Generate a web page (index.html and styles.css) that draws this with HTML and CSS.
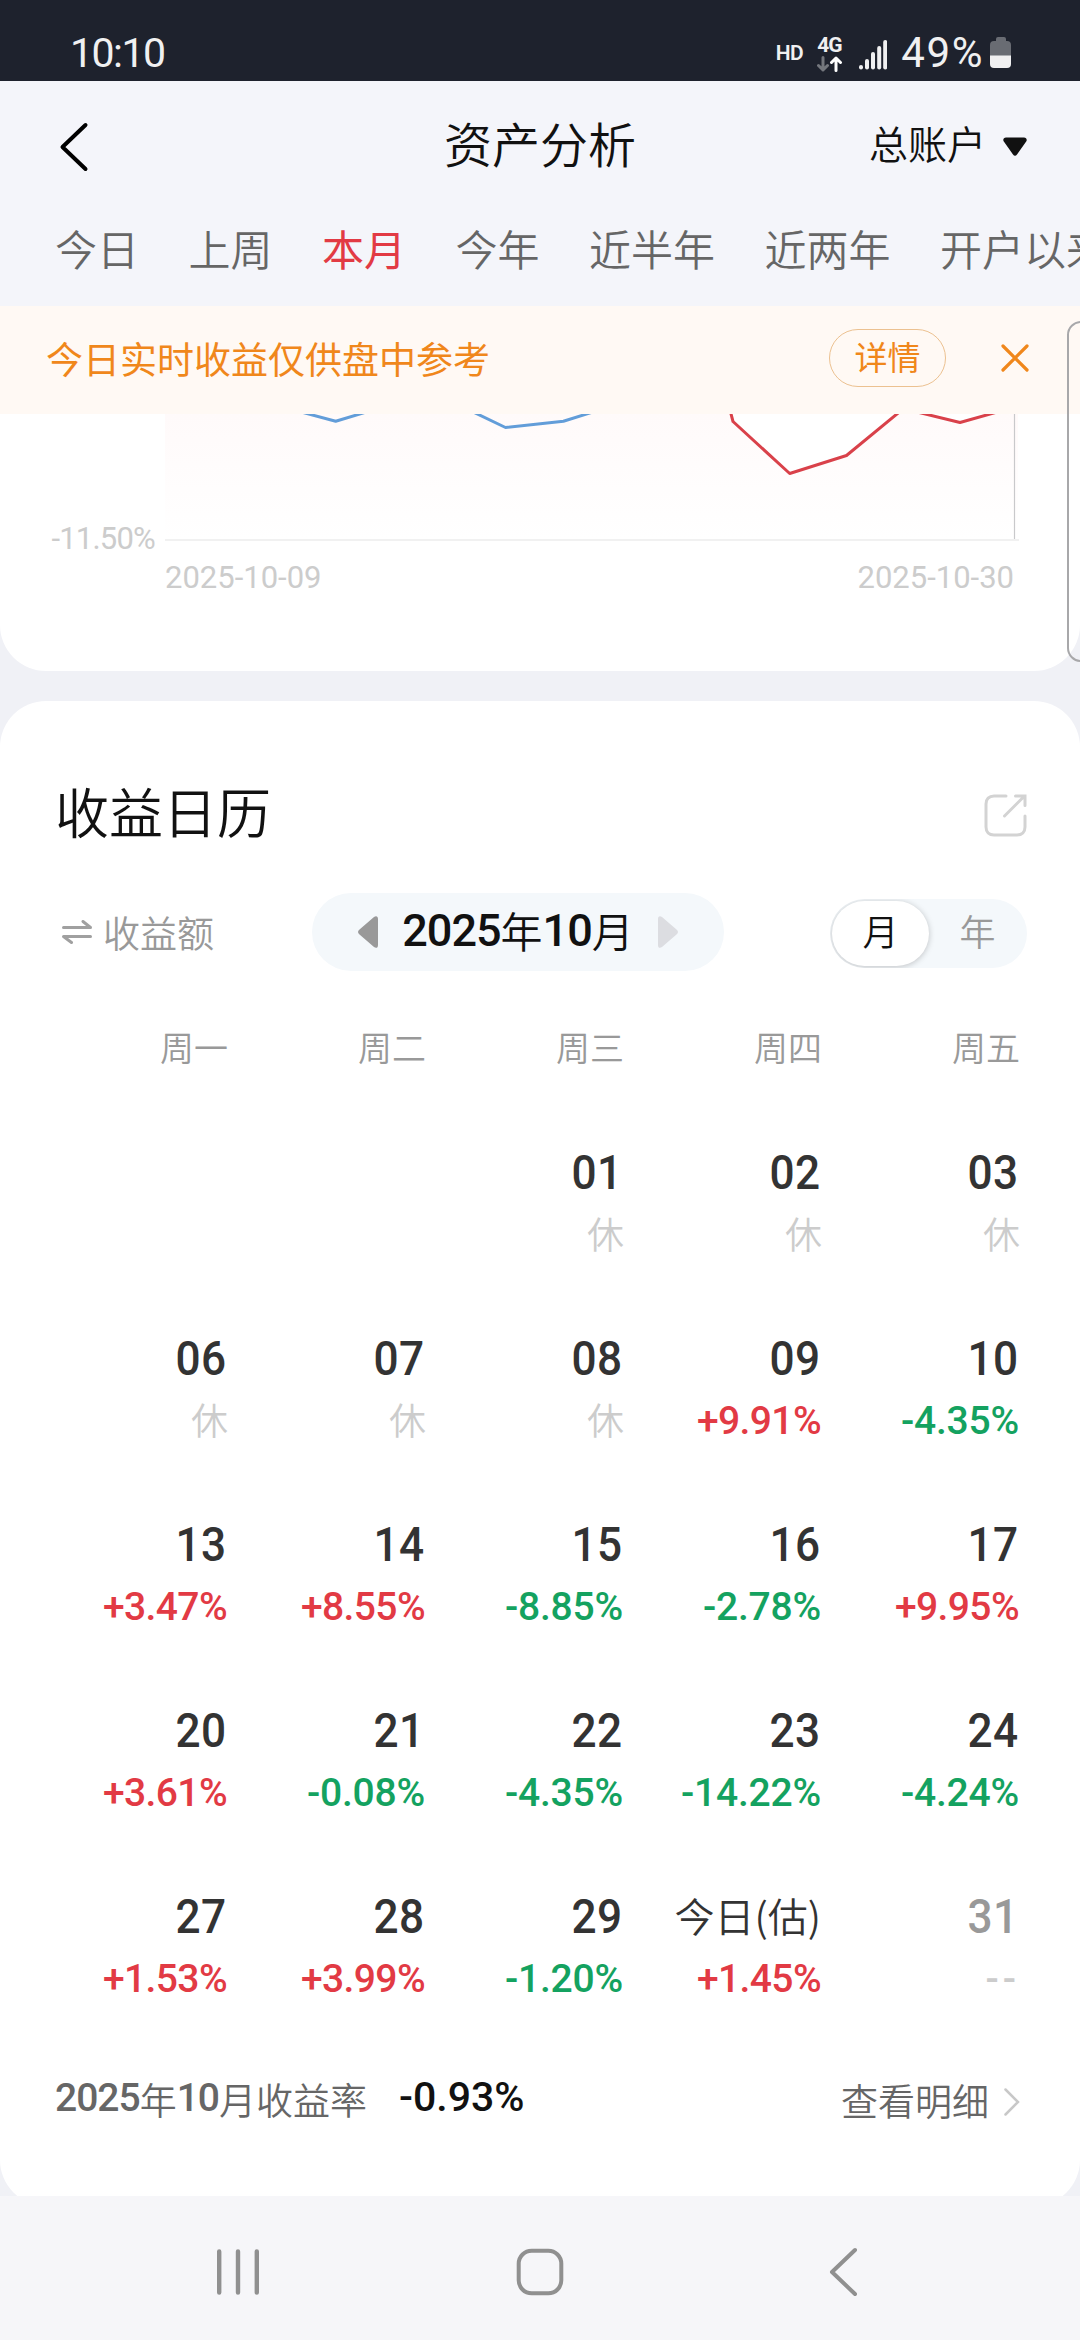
FILE: index.html
```html
<!DOCTYPE html>
<html lang="zh-CN">
<head>
<meta charset="utf-8">
<title>资产分析</title>
<link rel="stylesheet" href="styles.css">
</head>
<body>
<div class="status">
  <span class="clock">10:10</span>
  <span class="hd">HD</span>
  <span class="net">
    <b>4G</b>
    <svg width="26" height="16" viewBox="0 0 26 16" fill="none" stroke-width="3" stroke-linecap="round" stroke-linejoin="round"><path stroke="#74777d" d="M6 1.5V14M1.5 9.5 6 14l4.500-4.500"/><path stroke="#fff" d="M19 14.500V2M14.500 6.500 19 2l4.500 4.500"/></svg>
  </span>
  <svg class="signal" width="28" height="30" viewBox="0 0 28 30" fill="#f0f0f1"><rect x="0" y="25" width="4" height="4.500" rx="2"/><rect x="6" y="19" width="4" height="10.500" rx="2"/><rect x="12" y="12" width="4" height="17.500" rx="2"/><rect x="18.200" y="6" width="4" height="23.500" rx="2"/><rect x="24.200" y="0" width="4" height="29.500" rx="2"/></svg>
  <span class="level">49%</span>
  <svg class="battery" width="22" height="32" viewBox="0 0 22 32"><path fill="#696c73" d="M8 0h6a2 2 0 0 1 2 2v2h1a4 4 0 0 1 4 4v11H0V8a4 4 0 0 1 4-4h2V2a2 2 0 0 1 2-2z"/><path fill="#f0f0f1" d="M0 18.500h21V27a4 4 0 0 1-4 4H4a4 4 0 0 1-4-4z"/></svg>
</div>

<header class="topbar">
  <svg class="back" width="32" height="52" viewBox="0 0 32 52" fill="none" stroke="#000" stroke-width="4" stroke-linecap="round" stroke-linejoin="round"><path d="M27.500 4 4.500 26l23 22"/></svg>
  <h1>资产分析</h1>
  <div class="account">总账户
    <svg width="24" height="20" viewBox="0 0 24 20" fill="#111"><path d="M3 .5h18c2.500 0 3.500 2.500 2 4.300L14 17.500c-1.200 1.700-2.800 1.700-4 0L1 4.800C-.5 3 .5.5 3 .5z"/></svg>
  </div>
</header>
<nav class="tabs"><span>今日</span><span>上周</span><span class="active">本月</span><span>今年</span><span>近半年</span><span>近两年</span><span>开户以来</span></nav>

<div class="notice">
  <span class="notice-text">今日实时收益仅供盘中参考</span>
  <span class="detail">详情</span>
  <svg width="28" height="28" viewBox="0 0 28 28" fill="none" stroke="#f0871b" stroke-width="3.200" stroke-linecap="round"><path d="M2 2l24 24M26 2 2 26"/></svg>
</div>

<main>
  <section class="card chart">
    <div class="plot">
      <span class="ylabel">-11.50%</span>
      <svg width="854" height="127" viewBox="165 414 854 127" fill="none" stroke-width="3" stroke-linejoin="round">
        <defs><linearGradient id="fade" x1="0" y1="0" x2="0" y2="1"><stop offset="0" stop-color="#fffafa"/><stop offset="1" stop-color="#ffffff"/></linearGradient></defs>
        <path fill="url(#fade)" d="M165 414H731L733 421.500 789.700 473.500 846.500 455.500 897 414H924L960 422.500 991 414H1018V540H165z"/>
        <path stroke="#ececec" stroke-width="1.500" d="M165 540H1019"/>
        <path stroke="#c9c9cb" stroke-width="1.200" d="M1014.500 410V539"/>
        <path stroke="#629dd9" d="M300.500 411.800 335.700 421.300 368 411.500M468 409.500 505.500 427.500 563.400 421.300 596 411"/>
        <path stroke="#d9414a" d="M730 410 733 421.500 789.700 473.500 846.500 455.500 903 409M915 411.500 960 422.500 999 411.500"/>
      </svg>
    </div>
    <div class="dates"><span>2025-10-09</span><span>2025-10-30</span></div>
  </section>

  <section class="card calendar">
    <div class="title-row">
      <h2>收益日历</h2>
      <svg width="43" height="43" viewBox="0 0 43 43" fill="none" stroke="#d3d3d3" stroke-width="3" stroke-linecap="round"><path d="M22 2H10C5 2 2 5 2 10V33c0 5 3 8 8 8H33c5 0 8-3 8-8V22"/><path d="M20.500 22 39 3.500M31.500 2H41V11.500"/></svg>
    </div>
    <div class="controls">
      <div class="switch">
        <svg width="30" height="24" viewBox="0 0 30 24" fill="none" stroke="#a0a0a0" stroke-width="3" stroke-linecap="round" stroke-linejoin="round"><path d="M1.500 7.500h27L21 1.500M28.500 16.500h-27L9.500 22.500"/></svg>
        <span>收益额</span>
      </div>
      <div class="month">
        <svg width="20" height="32" viewBox="0 0 20 32" fill="#999"><path d="M20 3v26c0 3-2 3.500-4 2L1.500 18.500c-2-1.700-2-3.300 0-5L16 1c2-1.500 4-1 4 2z"/></svg>
        <span class="label"><i>2025</i>年<i>10</i>月</span>
        <svg width="20" height="32" viewBox="0 0 20 32" fill="#dcdde1"><path d="M0 3v26c0 3 2 3.500 4 2l14.500-12.500c2-1.700 2-3.300 0-5L4 1C2-.5 0 0 0 3z"/></svg>
      </div>
      <div class="toggle"><span class="on">月</span><span>年</span></div>
    </div>
    <div class="grid weekdays"><span>周一</span><span>周二</span><span>周三</span><span>周四</span><span>周五</span></div>
    <div class="grid days">
      <div></div><div></div>
      <div><b>01</b><em>休</em></div><div><b>02</b><em>休</em></div><div><b>03</b><em>休</em></div>
      <div><b>06</b><em>休</em></div><div><b>07</b><em>休</em></div><div><b>08</b><em>休</em></div><div><b>09</b><span class="up">+9.91%</span></div><div><b>10</b><span class="down">-4.35%</span></div>
      <div><b>13</b><span class="up">+3.47%</span></div><div><b>14</b><span class="up">+8.55%</span></div><div><b>15</b><span class="down">-8.85%</span></div><div><b>16</b><span class="down">-2.78%</span></div><div><b>17</b><span class="up">+9.95%</span></div>
      <div><b>20</b><span class="up">+3.61%</span></div><div><b>21</b><span class="down">-0.08%</span></div><div><b>22</b><span class="down">-4.35%</span></div><div><b>23</b><span class="down">-14.22%</span></div><div><b>24</b><span class="down">-4.24%</span></div>
      <div><b>27</b><span class="up">+1.53%</span></div><div><b>28</b><span class="up">+3.99%</span></div><div><b>29</b><span class="down">-1.20%</span></div><div><b class="today">今日(估)</b><span class="up">+1.45%</span></div><div><b class="future">31</b><span class="none">--</span></div>
    </div>
    <div class="summary">
      <span class="sum-label"><i>2025</i>年<i>10</i>月收益率</span>
      <span class="sum-value">-0.93%</span>
      <span class="more">查看明细</span>
      <svg width="16" height="28" viewBox="0 0 16 28" fill="none" stroke="#c8c8c8" stroke-width="2.500" stroke-linecap="round"><path d="M1.500 1.500 14 14 1.500 26.500"/></svg>
    </div>
  </section>
</main>

<footer class="sysnav">
  <svg width="44" height="48" viewBox="0 0 44 48" stroke="#909090" stroke-width="4.400" stroke-linecap="round"><path d="M3.200 3.500v41M22 3.500v41M40.800 3.500v41"/></svg>
  <svg width="48" height="48" viewBox="0 0 48 48" fill="none" stroke="#909090" stroke-width="4"><rect x="2.700" y="2.700" width="42.600" height="42.600" rx="13"/></svg>
  <svg width="30" height="50" viewBox="0 0 30 50" fill="none" stroke="#909090" stroke-width="4" stroke-linecap="round" stroke-linejoin="round"><path d="M26 3 3 25l23 22"/></svg>
</footer>
<div class="edge-handle"></div>
</body>
</html>
```
FILE: styles.css
```css
* { box-sizing: border-box; }
body {
  margin: 0;
  width: 1080px;
  height: 2340px;
  overflow: hidden;
  position: relative;
  display: flex;
  flex-direction: column;
  background: #f4f5fa;
  font-family: "Noto Sans CJK SC", sans-serif;
  font-weight: 400;
  color: #111;
  white-space: nowrap;
}
svg { display: block; flex: none; }
h1, h2 { margin: 0; font-weight: 350; }
i, em { font-style: normal; }

.status {
  height: 81px;
  flex: none;
  background: #1e222d;
  color: #f0f0f1;
  font-family: Roboto, sans-serif;
  display: flex;
  align-items: flex-start;
  padding: 29px 68px 0 70px;
}
.clock, .level { font-size: 41px; line-height: 48px; font-weight: 400; }
.clock { flex: 1; letter-spacing: -1.500px; }
.level { font-size: 42px; letter-spacing: 1.600px; }
.hd { font-size: 21px; line-height: 48px; font-weight: 600; margin-right: 14px; letter-spacing: -.5px; }
.net { width: 26px; margin: 6px 16px 0 0; }
.net b { display: block; font-size: 21px; line-height: 20px; font-weight: 700; letter-spacing: -1px; }
.net svg { margin-top: 1px; }
.signal { margin: 11px 14px 0 0; }
.battery { margin: 8px 0 0 6px; }

.topbar {
  height: 122px;
  flex: none;
  display: grid;
  grid-template-columns: 1fr auto 1fr;
  align-items: center;
  padding: 0 53px 0 58px;
  font-weight: 350;
}
.topbar h1 { font-size: 48px; line-height: 60px; margin-left: -5px; }
.back { margin-top: 10px; }
.account { justify-self: end; display: flex; align-items: center; gap: 17px; font-size: 39px; line-height: 60px; }
.account svg { margin-top: 9px; }

.tabs {
  height: 103px;
  flex: none;
  display: flex;
  gap: 49.500px;
  padding-left: 55px;
  font-size: 42px;
  font-weight: 350;
  line-height: 89px;
  color: #666;
  overflow: hidden;
}
.tabs .active { color: #e23a44; font-weight: 400; }

.notice {
  height: 108px;
  flex: none;
  display: flex;
  align-items: center;
  padding: 0 51px 4px 46px;
  background: #fff9f4;
  color: #f0871b;
}
.notice-text { font-size: 37px; flex: 1; }
.detail {
  width: 117px;
  height: 58px;
  border: 1.500px solid #ecc190;
  border-radius: 29px;
  font-size: 33px;
  line-height: 52px;
  text-align: center;
  margin-right: 55px;
}

main {
  flex: 1;
  min-height: 0;
  overflow: hidden;
  background: #f0f1f6;
}
.card { background: #fff; }
.chart {
  height: 257px;
  border-radius: 0 0 46px 46px;
  font-family: Roboto, sans-serif;
  font-size: 31px;
  color: #ccc;
}
.plot { display: flex; align-items: flex-end; }
.ylabel { width: 165px; padding-right: 10px; text-align: right; line-height: 36px; margin-bottom: -16px; letter-spacing: -.8px; }
.dates { display: flex; justify-content: space-between; padding: 1px 66px 0 165px; line-height: 72px; }

.calendar {
  margin-top: 30px;
  height: 1505px;
  border-radius: 46px;
  padding-top: 60px;
  font-weight: 350;
}
.title-row { height: 100px; padding: 0 53px 0 55px; display: flex; align-items: center; justify-content: space-between; }
.title-row h2 { font-size: 54px; line-height: 80px; }
.title-row svg { margin-top: 8px; }

.controls { height: 78px; margin-top: 32px; padding: 0 53px 0 62px; display: flex; align-items: center; }
.switch { width: 250px; display: flex; align-items: center; gap: 11px; font-size: 37px; color: #999; }
.month {
  width: 412px;
  height: 78px;
  border-radius: 39px;
  background: #f4f8fb;
  display: flex;
  align-items: center;
  justify-content: space-between;
  padding: 0 46px;
}
.label { display: flex; align-items: center; font-size: 42px; line-height: 60px; margin-top: -4px; }
.label i { font-family: Roboto, sans-serif; font-weight: 500; font-size: 45px; letter-spacing: -1px; margin-top: 2px; }
.toggle {
  width: 197px;
  height: 69px;
  margin: 3px 0 0 auto;
  border-radius: 35px;
  background: #f4f8fb;
  display: flex;
  align-items: center;
  padding-left: 2px;
  overflow: hidden;
  font-size: 36px;
  line-height: 58px;
  color: #999;
}
.toggle span { width: 97px; height: 65px; text-align: center; }
.toggle .on { background: #fff; color: #111; border-radius: 33px; box-shadow: 0 1px 6px rgba(0, 0, 0, .22); }

.grid { display: grid; grid-template-columns: repeat(5, 198px); padding-left: 30px; text-align: right; }
.weekdays { margin-top: 46px; font-size: 34px; line-height: 60px; color: #999; }
.days { margin-top: 71px; grid-auto-rows: 186px; }
.days div { display: flex; flex-direction: column; align-items: flex-end; gap: 12px; padding-right: 1px; font-family: Roboto, sans-serif; }
.days b { font-size: 48px; line-height: 50px; font-weight: 500; color: #333; letter-spacing: .5px; transform: scaleX(.92); transform-origin: right; }
.days em { font: 350 37px/47px "Noto Sans CJK SC", sans-serif; height: 50px; color: #ccc; margin-right: -1px; }
.days span { font-size: 39px; line-height: 51px; font-weight: 500; }
.days .up { color: #e23a44; letter-spacing: -.6px; }
.days .down { color: #14a260; letter-spacing: -.2px; }
.days .none { color: #ccc; letter-spacing: 4px; margin-right: -1px; }
.days .today { font: 350 40px/47px "Noto Sans CJK SC", sans-serif; height: 50px; letter-spacing: 0; transform: none; }
.days .future { color: #999; }

.summary { height: 43px; display: flex; align-items: center; padding: 0 60px 0 55px; color: #666; font-size: 37px; }
.sum-label { display: flex; align-items: center; line-height: 43px; }
.sum-label i { font-family: Roboto, sans-serif; font-size: 39px; font-weight: 500; letter-spacing: -1px; margin-bottom: 3px; }
.sum-value { flex: 1; margin: 0 0 5px 32px; font: 500 41px/43px Roboto, sans-serif; color: #111; }
.more { margin-right: 15px; }
.summary svg { margin-top: 4px; }

.sysnav { height: 144px; flex: none; background: #f6f6f9; display: flex; align-items: center; padding: 8px 0 0 216px; }
.sysnav svg + svg { margin-left: 256px; }
.sysnav svg + svg + svg { margin-left: 265px; }

/* edge panel handle floats above the page */
.edge-handle { position: absolute; left: 1067px; top: 321px; width: 30px; height: 341px; border: 2px solid #a8a8aa; border-radius: 14px; }
```
